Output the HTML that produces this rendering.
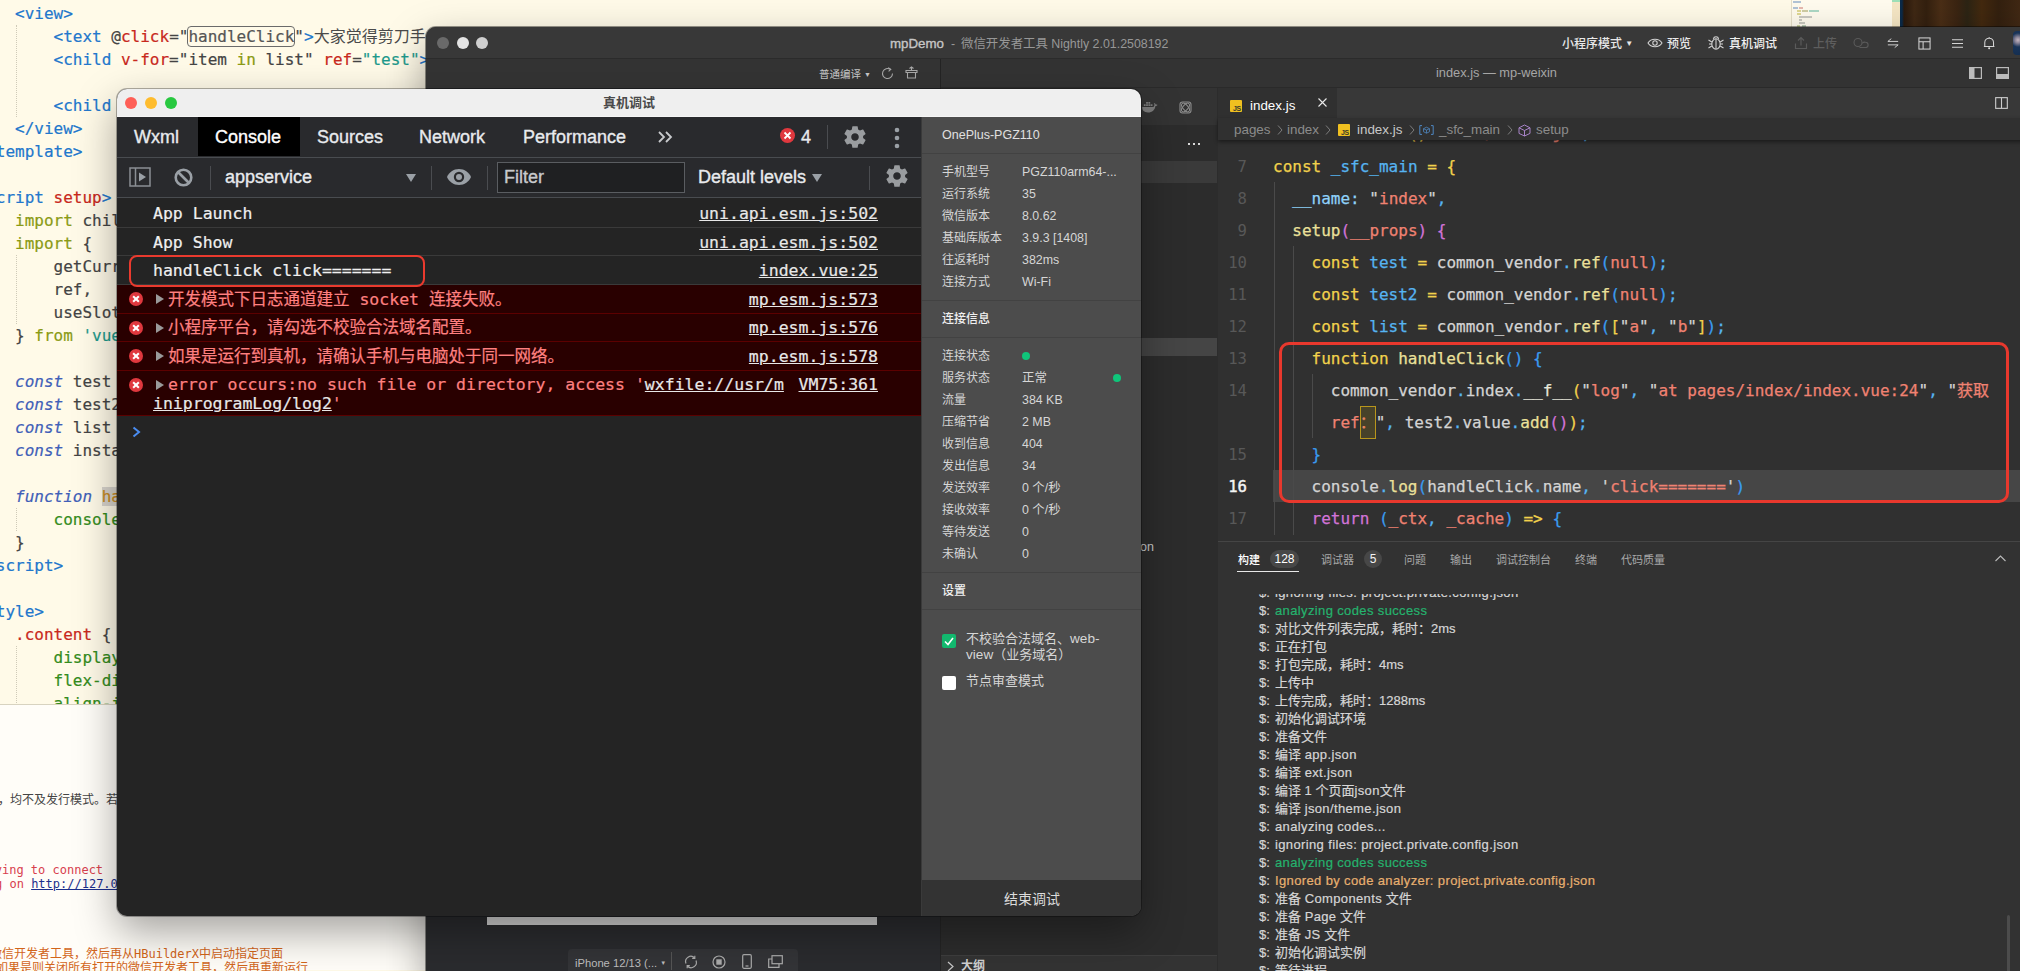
<!DOCTYPE html>
<html lang="zh">
<head>
<meta charset="utf-8">
<title>真机调试</title>
<style>
*{box-sizing:border-box;margin:0;padding:0}
html,body{width:2020px;height:971px;overflow:hidden;background:#fffae8}
body{position:relative;font-family:"Liberation Sans","Noto Sans CJK SC",sans-serif;}
.abs,.t{position:absolute}
.t{white-space:pre;line-height:1}
.mono{font-family:"DejaVu Sans Mono","Liberation Mono","Noto Sans CJK SC",monospace}
svg{position:absolute;overflow:visible}
/* ---------- HBuilderX (background) ---------- */
#hb{left:0;top:0;width:2020px;height:971px;background:#fffae8}
#hbcode{left:0;top:0;width:440px;height:705px;overflow:hidden}
.hl{position:absolute;white-space:pre;font-family:"DejaVu Sans Mono","Noto Sans CJK SC",monospace;font-size:16px;line-height:23px;height:23px;color:#444;-webkit-text-stroke:.2px}
.tg{color:#2277cc}.at{color:#c8281c}.st{color:#1e9a8c}.kw{color:#8a9a14}.ck{color:#3f5fb8;font-style:italic}.gr{color:#348c1c}.pl{color:#444}
.bx{outline:1px solid #6a6a6a;outline-offset:0;border-radius:3px;color:#555}
.zh{-webkit-text-stroke:0;color:#4a4a4a}
.hh{color:#c88a20;background:#d8d4cc}
.ig{position:absolute;left:16px;width:0;border-left:1px dotted #cfcab8}
#hbcon{left:0;top:704px;width:2020px;height:266px;background:#fffdf8;border-top:1px solid #d8d3c0}
</style>
<style>
.mm{position:absolute;height:2px;display:block;opacity:.9}
/* ---------- WeChat devtools window (origin 426,27) ---------- */
#wx{left:426px;top:27px;width:1600px;height:960px;background:#2e2e2e;border-radius:10px 0 0 0;box-shadow:0 16px 42px rgba(0,0,0,.36),0 0 0 1px rgba(0,0,0,.4);overflow:hidden;color:#ccc;font-size:13px}
#wx .tb{left:0;top:0;width:1600px;height:32px;background:#383838;border-bottom:1px solid #2b2b2b}
#wx .tl{position:absolute;top:10px;width:12px;height:12px;border-radius:50%}
#wx .row2l{left:0;top:32px;width:514px;height:29px;background:#343434}
#wx .row2r{left:515px;top:32px;width:1085px;height:29px;background:#333;border-bottom:1px solid #2a2a2a}
#wx .sim{left:0;top:61px;width:514px;height:900px;background:#2a2b2e}
#wx .vsep{left:514px;top:32px;width:1px;height:930px;background:#242424}
#wx .tree{left:515px;top:61px;width:277px;height:900px;background:#2c2c2c}
#wx .ed{left:792px;top:61px;width:810px;height:900px;background:#303030}
#wx .tabs{left:792px;top:61px;width:810px;height:30px;background:#383838}
#wx .tab{left:792px;top:61px;width:119px;height:30px;background:#303030}
#wx .bc{left:792px;top:91px;width:810px;height:22px;background:#303030;box-shadow:0 2px 4px rgba(0,0,0,.45);color:#8c8c8c;font-size:13px}
.jsic{position:absolute;width:12px;height:12px;background:#f0c020;border-radius:1px}
.jsic:after{content:"JS";position:absolute;right:1px;bottom:0;font:bold 7px/7px "Liberation Sans",sans-serif;color:#3a3a2a;letter-spacing:-.3px}
.cl{position:absolute;left:847px;white-space:pre;font-family:"DejaVu Sans Mono","Noto Sans CJK SC",monospace;font-size:16px;line-height:32px;height:32px;color:#d4d4d4;-webkit-text-stroke:.25px}
.ln{position:absolute;left:789px;width:32px;text-align:right;font-family:"DejaVu Sans Mono",monospace;font-size:15.600px;line-height:32px;height:32px;color:#585858}
.y{color:#f2d24c}.b{color:#56b4f2}.r{color:#f08272}.p{color:#d274d8}.w{color:#d8d8d8}.b2{color:#3a9cf0}.pb{color:#8fd2fa}.w2{color:#e6e6da}
.gd{position:absolute;width:1px;background:#4a4a4a}
#wx .pn{left:792px;top:514px;width:810px;height:450px;background:#323232;border-top:1px solid #454545}
.pt{position:absolute;top:527px;font-size:11px;line-height:12px;color:#a8a8a8;white-space:pre}
.bdg{position:absolute;top:523px;height:18px;border-radius:9px;background:#474747;color:#ddd;font-size:11px;line-height:18px;text-align:center}
.lg{position:absolute;left:832px;white-space:pre;font-size:13px;line-height:18px;height:18px;color:#d6d6d6;-webkit-text-stroke:.2px}
.lg i{font-style:normal;display:inline-block;width:17px}
.la{letter-spacing:.37px}.lg b{font-weight:normal;letter-spacing:.37px}.cb{position:relative}.cb:before{content:"";position:absolute;left:0;right:0;top:-7px;bottom:-7px;border:1px solid #b8961c;background:rgba(190,160,20,.17)}.fn{color:#ebe09a}
.g{color:#25b26e}.o{color:#e8b070}
</style>
<style>
/* ---------- Remote debug window (origin 117,89) ---------- */
#rd{left:117px;top:89px;width:1024px;height:827px;background:#242424;border-radius:10px;box-shadow:0 16px 42px rgba(0,0,0,.36),0 0 0 1px rgba(0,0,0,.3);overflow:hidden}
#rd .ttl{left:0;top:0;width:1024px;height:28px;background:#efefef;border-bottom:1px solid #f6f6f6}
#rd .tl{position:absolute;top:8px;width:12px;height:12px;border-radius:50%}
#rd .dtabs{left:0;top:28px;width:804px;height:41px;background:#292a2d;border-bottom:1px solid #494c50}
#rd .dtool{left:0;top:69px;width:804px;height:40px;background:#292a2d;border-bottom:1px solid #494c50}
.dt{position:absolute;top:38px;-webkit-text-stroke:.35px;font-size:18px;line-height:20px;color:#e8eaed;white-space:pre}
.tt{position:absolute;top:78px;-webkit-text-stroke:.35px;font-size:18px;line-height:20px;color:#e8eaed;white-space:pre}
.vs{position:absolute;width:1px;height:24px;background:#4a4c50}
.cr{position:absolute;left:0;width:804px;border-bottom:1px solid #3a3a3a;font-family:"DejaVu Sans Mono","Noto Sans CJK SC",monospace;font-size:16.5px;line-height:22px;color:#f0f0f0;white-space:pre;-webkit-text-stroke:.2px}
.cr .m{position:absolute;left:36px;top:4px}
.cr .lk{position:absolute;right:43px;top:4px;text-decoration:underline;color:#e8e8e8}
.er{background:#290000;border-bottom:1px solid #5c0000;color:#ff8080}
.er .m{left:51px}
.ei{position:absolute;left:12px;top:7px;width:14px;height:14px;border-radius:50%;background:#e0383e}
.ei:before,.ei:after{content:"";position:absolute;left:3px;top:6px;width:8px;height:2px;background:#fff;transform:rotate(45deg)}
.ei:after{transform:rotate(-45deg)}
.tri{position:absolute;left:39px;top:9px;width:0;height:0;border-left:8px solid #9a9a9a;border-top:5px solid transparent;border-bottom:5px solid transparent}
#rd .info{left:804px;top:28px;width:220px;height:799px;background:#4c4c4c;border-left:1px solid #3a3a3a;color:#d8d8d8;font-size:12px}
.il{position:absolute;left:20px;font-size:12px;line-height:14px;color:#d6d6d6;white-space:pre}
.iv{position:absolute;left:100px;font-size:12.400px;line-height:14px;color:#d6d6d6;white-space:pre}
.la2{font-size:13.6px}
.hr{position:absolute;left:0;width:220px;height:1px;background:#424242}
.dot{position:absolute;width:8px;height:8px;border-radius:50%;background:#0fc57a}
</style>
</head>
<body>
<div id="hb" class="abs">
<div id="hbcode" class="abs">
<div class="hl" style="top:1.5px;left:15.0px"><span class="tg">&lt;view&gt;</span></div>
<div class="hl" style="top:24.5px;left:53.5px"><span class="tg">&lt;text</span> <span class="pl">@</span><span class="at">click</span>="<span class="bx">handleClick</span>"<span class="tg">&gt;</span><span class="zh">大家觉得剪刀手</span></div>
<div class="hl" style="top:47.5px;left:53.5px"><span class="tg">&lt;child</span> <span class="at">v-for</span>="item <span class="kw">in</span> list" <span class="at">ref</span>=<span class="st">"test"</span><span class="tg">&gt;</span></div>
<div class="hl" style="top:93.5px;left:53.5px"><span class="tg">&lt;child</span> </div>
<div class="hl" style="top:116.5px;left:15.0px"><span class="tg">&lt;/view&gt;</span></div>
<div class="hl" style="top:139.5px;left:-23.5px"><span class="tg">&lt;/template&gt;</span></div>
<div class="hl" style="top:185.5px;left:-23.5px"><span class="tg">&lt;script</span> <span class="at">setup</span><span class="tg">&gt;</span></div>
<div class="hl" style="top:208.5px;left:15.0px"><span class="kw">import</span> child from</div>
<div class="hl" style="top:231.5px;left:15.0px"><span class="kw">import</span> {</div>
<div class="hl" style="top:254.5px;left:53.5px">getCurrentInstance,</div>
<div class="hl" style="top:277.5px;left:53.5px">ref,</div>
<div class="hl" style="top:300.5px;left:53.5px">useSlots</div>
<div class="hl" style="top:323.5px;left:15.0px">} <span class="kw">from</span> <span class="st">'vue'</span></div>
<div class="hl" style="top:369.5px;left:15.0px"><span class="ck">const</span> test = ref(null)</div>
<div class="hl" style="top:392.5px;left:15.0px"><span class="ck">const</span> test2 = ref(null)</div>
<div class="hl" style="top:415.5px;left:15.0px"><span class="ck">const</span> list = ref([])</div>
<div class="hl" style="top:438.5px;left:15.0px"><span class="ck">const</span> instance = getCurrentInstance()</div>
<div class="hl" style="top:484.5px;left:15.0px"><span class="ck">function</span> <span class="hh">handleClick</span>() {</div>
<div class="hl" style="top:507.5px;left:53.5px"><span class="gr">console</span>.log(handleClick.name)</div>
<div class="hl" style="top:530.5px;left:15.0px">}</div>
<div class="hl" style="top:553.5px;left:-23.5px"><span class="tg">&lt;/script&gt;</span></div>
<div class="hl" style="top:599.5px;left:-23.5px"><span class="tg">&lt;style&gt;</span></div>
<div class="hl" style="top:622.5px;left:15.0px"><span class="at">.content</span> {</div>
<div class="hl" style="top:645.5px;left:53.5px"><span class="gr">display</span>: flex;</div>
<div class="hl" style="top:668.5px;left:53.5px"><span class="gr">flex-direction</span>: column;</div>
<div class="hl" style="top:691.5px;left:53.5px"><span class="gr">align-items</span>: center;</div>
<div class="ig" style="top:24.5px;height:92px"></div>
<div class="ig" style="top:254.5px;height:69px"></div>
<div class="ig" style="top:507.5px;height:23px"></div>
<div class="ig" style="top:645.5px;height:69px"></div>
</div>
<div id="hbmini" class="abs" style="left:1791px;top:0;width:101px;height:27px;background:#fffbee;border-left:1px solid #e6dfc8">
 <i class="mm" style="left:1px;top:1px;width:8px;background:#a9bdd2"></i>
 <i class="mm" style="left:1px;top:7px;width:5px;background:#a9bdd2"></i><i class="mm" style="left:7px;top:7px;width:4px;background:#e3b0a6"></i>
 <i class="mm" style="left:5px;top:10px;width:4px;background:#ddd487"></i><i class="mm" style="left:10px;top:10px;width:6px;background:#cbc79a"></i><i class="mm" style="left:17px;top:10px;width:10px;background:#a3d4bf"></i>
 <i class="mm" style="left:5px;top:13px;width:4px;background:#ddd487"></i>
 <i class="mm" style="left:7px;top:16px;width:13px;background:#c4c3ba"></i>
 <i class="mm" style="left:7px;top:19px;width:3px;background:#c4c3ba"></i>
 <i class="mm" style="left:7px;top:22px;width:6px;background:#c4c3ba"></i>
 <i class="mm" style="left:5px;top:25px;width:3px;background:#c9d29a"></i><i class="mm" style="left:10px;top:25px;width:4px;background:#b5c9b0"></i>
</div>
<div class="abs" style="left:1892px;top:0;width:8px;height:27px;background:#f5e6c4"></div>
<div class="abs" style="left:1892px;top:0;width:8px;height:2px;background:#9fe0b8"></div>
<div class="abs" style="left:1900px;top:0;width:120px;height:28px;background:linear-gradient(90deg,#0b2a48 0,#0b2a48 2px,#2a190c 4px,#3f2814 12%,#33200f 22%,#4a2e16 34%,#3a2412 48%,#2c2414 56%,#43290f 68%,#33200f 82%,#402814 100%)"></div>
<div id="hbcon" class="abs">
 <div class="t" style="left:-2px;top:89px;font-size:12px;color:#444">，均不及发行模式。若</div>
 <div class="t mono" style="left:-12.5px;top:159px;font-size:12px;color:#d8404e">rying to connect</div>
 <div class="t mono" style="left:-5px;top:173px;font-size:12px;color:#d8404e">g on <span style="color:#1c2f8c;text-decoration:underline">http://127.0.0.1</span></div>
 <div class="t mono" style="left:-10px;top:243px;font-size:12px;color:#d2651a">微信开发者工具，然后再从HBuilderX中启动指定页面</div>
 <div class="t mono" style="left:-4px;top:257px;font-size:12px;color:#d2651a">如果是则关闭所有打开的微信开发者工具，然后再重新运行</div>
</div>
</div>
<div id="wx" class="abs">
<div class="abs tb"></div>
<div class="tl" style="left:11px;background:#6a6a6a"></div>
<div class="tl" style="left:31px;background:#e4e4e4"></div>
<div class="tl" style="left:50px;background:#cfcfcf"></div>
<div class="t" style="left:464px;top:10px;font-size:12.4px;color:#979797"><span style="color:#c6c6c6;font-size:13.3px;-webkit-text-stroke:.35px #c6c6c6">mpDemo</span><span style="margin:0 6px 0 7px">-</span>微信开发者工具 Nightly 2.01.2508192</div>
<div class="t" style="left:1136px;top:11px;font-size:12px;color:#e8e8e8;font-weight:500">小程序模式 <span style="font-size:8px;position:relative;top:-2px">▼</span></div>
<svg style="left:1221px;top:10px" width="16" height="12" viewBox="0 0 16 12"><path d="M1 6 C4 1 12 1 15 6 C12 11 4 11 1 6Z" fill="none" stroke="#d4d4d4" stroke-width="1.05"/><circle cx="8" cy="6" r="2.2" fill="none" stroke="#d4d4d4" stroke-width="1.05"/></svg>
<div class="t" style="left:1241px;top:11px;font-size:12px;color:#e8e8e8;font-weight:500">预览</div>
<svg style="left:1281px;top:8px" width="18" height="16" viewBox="0 0 18 16"><ellipse cx="9" cy="9" rx="4.2" ry="5.2" fill="none" stroke="#d4d4d4" stroke-width="1.1"/><path d="M9 4v10M6.3 3.8a2.8 2.8 0 0 1 5.4 0M4.8 7 1.5 5M4.8 11 1.5 13M13.2 7l3.3-2M13.2 11l3.3 2M4.8 9H2M13.2 9H16" fill="none" stroke="#d4d4d4" stroke-width="1.05"/></svg>
<div class="t" style="left:1303px;top:11px;font-size:12px;color:#f0f0f0;font-weight:500">真机调试</div>
<svg style="left:1368px;top:9px" width="14" height="14" viewBox="0 0 14 14"><path d="M1.5 7.5v5h11v-5M7 1.5v8M4 4.5l3-3 3 3" fill="none" stroke="#5a5a5a" stroke-width="1.2"/></svg>
<div class="t" style="left:1387px;top:11px;font-size:12px;color:#5e5e5e;font-weight:500">上传</div>
<svg style="left:1426px;top:10px" width="17" height="12" viewBox="0 0 17 12"><circle cx="6" cy="5.5" r="4" fill="none" stroke="#5a5a5a" stroke-width="1.1"/><path d="M7.5 10.5h6a2.6 2.6 0 0 0 0-5.2a3 3 0 0 0-3.2 1" fill="none" stroke="#5a5a5a" stroke-width="1.1"/></svg>
<svg style="left:1461px;top:11px" width="12" height="10.300" viewBox="0 0 14 12"><path d="M1 4h12M1 4l4-3.200M13 8H1M13 8l-4 3.200" fill="none" stroke="#d4d4d4" stroke-width="1.1"/></svg>
<svg style="left:1492px;top:10px" width="13" height="13" viewBox="0 0 14 14"><rect x="1" y="1" width="12" height="12" fill="none" stroke="#d4d4d4" stroke-width="1.1"/><path d="M1 5h12M5.5 5v8" stroke="#d4d4d4" stroke-width="1.1"/></svg>
<svg style="left:1526px;top:11px" width="11" height="11" viewBox="0 0 12 12"><path d="M0 2h12M0 6h12M0 10h12" stroke="#d4d4d4" stroke-width="1.1"/></svg>
<svg style="left:1557px;top:9px" width="12.300" height="14" viewBox="0 0 14 16"><path d="M2 12V7.5a5 5 0 0 1 10 0V12M1 12h12M7 2.5V1" fill="none" stroke="#d4d4d4" stroke-width="1.2"/><circle cx="7" cy="14" r="1.2" fill="#ddd"/></svg>
<div class="abs" style="left:1587px;top:4px;width:24px;height:24px;border-radius:4px;background:radial-gradient(circle at 5px 9px,#c8b8c0 0,#8a8498 3px,#1a3458 7px,#0e2a4c 100%)"></div>
<div class="abs row2l"></div><div class="abs row2r"></div>
<div class="t" style="left:393px;top:42px;font-size:10.5px;color:#c8c8c8">普通编译 <span style="font-size:7px;position:relative;top:-1px">▼</span></div>
<svg style="left:455px;top:40px" width="13" height="13" viewBox="0 0 13 13"><path d="M11.5 6.5a5 5 0 1 1-2.2-4.1" fill="none" stroke="#aaa" stroke-width="1.1"/><path d="M7.2 0.6 9.8 2.4 7.6 4.4" fill="none" stroke="#aaa" stroke-width="1.1"/></svg>
<svg style="left:479px;top:39px" width="13" height="13" viewBox="0 0 13 13"><path d="M2.5 6.5h8v5.5h-8zM1 4.5h11v2H1zM6.5 4.5V1.2M4.5 2.5l2-1.5 2 1.5" fill="none" stroke="#aaa" stroke-width="1.1"/></svg>
<div class="t" style="left:1010px;top:40px;font-size:12.800px;color:#a6a6a6">index.js — mp-weixin</div>
<svg style="left:1543px;top:40px" width="13" height="12" viewBox="0 0 13 12"><rect x=".6" y=".6" width="11.8" height="10.8" fill="none" stroke="#bbb" stroke-width="1.2"/><rect x="1" y="1" width="4.5" height="10" fill="#bbb"/></svg>
<svg style="left:1570px;top:40px" width="13" height="12" viewBox="0 0 13 12"><rect x=".6" y=".6" width="11.8" height="10.8" fill="none" stroke="#bbb" stroke-width="1.2"/><rect x="1" y="7" width="11" height="4" fill="#bbb"/></svg>
<div class="abs sim"></div><div class="abs tree"></div><div class="abs vsep"></div>
<div class="abs" style="left:61px;top:890px;width:390px;height:8px;background:#d0d0d0"></div>
<div class="abs" style="left:142px;top:922px;width:230px;height:40px;background:#333437;border-radius:4px"></div>
<div class="t" style="left:149px;top:931px;font-size:11.2px;color:#bdbdbd">iPhone 12/13 (... <span style="font-size:6px;position:relative;top:-2px">▼</span></div>
<div class="abs" style="left:245px;top:925px;width:1px;height:18px;background:#555"></div>
<svg style="left:258px;top:928px" width="14" height="14" viewBox="0 0 14 14"><path d="M2 8.5A5.2 5.2 0 0 1 10.6 3M12 5.5A5.2 5.2 0 0 1 3.4 11" fill="none" stroke="#aaa" stroke-width="1.2"/><path d="M10.8.8v2.6H8.2M3.2 13.2v-2.6h2.6" fill="none" stroke="#aaa" stroke-width="1.2"/></svg>
<svg style="left:286px;top:928px" width="14" height="14" viewBox="0 0 14 14"><circle cx="7" cy="7" r="6" fill="none" stroke="#aaa" stroke-width="1.2"/><rect x="4.3" y="4.3" width="5.4" height="5.4" fill="#aaa"/></svg>
<svg style="left:316px;top:927px" width="10" height="15" viewBox="0 0 10 15"><rect x=".7" y=".7" width="8.6" height="13.6" rx="1.2" fill="none" stroke="#aaa" stroke-width="1.2"/><path d="M3.5 12h3" stroke="#aaa" stroke-width="1.2"/></svg>
<svg style="left:342px;top:928px" width="15" height="13" viewBox="0 0 15 13"><rect x="4" y=".7" width="10.3" height="8" fill="none" stroke="#aaa" stroke-width="1.2"/><path d="M4 4H.7v8.3H11V9" fill="none" stroke="#aaa" stroke-width="1.2"/></svg>
<div class="abs" style="left:515px;top:61px;width:276px;height:37px;background:#333"></div>
<div class="abs" style="left:714px;top:134px;width:77px;height:22px;background:#3a3a3a"></div>
<div class="abs" style="left:714px;top:311px;width:77px;height:18px;background:#454545"></div>
<div class="abs" style="left:762px;top:116px;width:2px;height:2px;background:#d8d8d8;box-shadow:5px 0 0 #d8d8d8,10px 0 0 #d8d8d8"></div>
<div class="t" style="left:714px;top:514px;font-size:12.5px;color:#c8c8c8">on</div>
<svg style="left:716px;top:73.5px" width="15.500" height="12" viewBox="0 0 17 13"><path d="M.3 6.500h11.200c1 0 1.700-.6 2-1.500.3-1-.1-1.900-.6-2.500.9-.4 1.800.3 2.100 1.300.7-.2 1.500 0 2 .4-.4.800-1.300 1.200-2.300 1.100C14.200 9.500 11.300 12.500 6.500 12.500 2.300 12.500.2 10 .3 6.500z" fill="#7c7c7c"/><path d="M2 3.500h2v2H2zM4.500 3.500h2v2h-2zM7 3.500h2v2H7zM4.500 1h2v2h-2zM7 1h2v2H7zM9.500 3.500h2v2h-2z" fill="#7c7c7c"/></svg>
<svg style="left:753px;top:74px" width="13" height="13" viewBox="0 0 13 13"><rect x="1" y="1" width="11" height="11" rx="2.5" fill="none" stroke="#8c8c8c" stroke-width="1.1"/><ellipse cx="6.5" cy="6.5" rx="2.6" ry="5.2" transform="rotate(40 6.5 6.5)" fill="none" stroke="#8c8c8c" stroke-width="1"/><ellipse cx="6.500" cy="6.500" rx="2.600" ry="5.200" transform="rotate(-40 6.5 6.5)" fill="none" stroke="#8c8c8c" stroke-width="1"/></svg>
<div class="abs" style="left:515px;top:928px;width:276px;height:34px;background:#333;border-top:1px solid #3e3e3e"></div>
<svg style="left:521px;top:934px" width="7" height="11" viewBox="0 0 7 11"><path d="M1 1l5 4.500-5 4.500" fill="none" stroke="#c8c8c8" stroke-width="1.200"/></svg><div class="t" style="left:535px;top:933px;font-size:12px;color:#d0d0d0;font-weight:bold">大纲</div>
<div class="abs ed"></div><div class="abs tabs"></div><div class="abs tab"></div>
<div class="jsic" style="left:804px;top:73px"></div>
<div class="t" style="left:824px;top:72px;font-size:13.4px;color:#fff">index.js</div>
<svg style="left:892px;top:71px" width="9" height="9" viewBox="0 0 9 9"><path d="M.5.5l8 8M8.5.5l-8 8" stroke="#e8e8e8" stroke-width="1.1"/></svg>
<svg style="left:1569px;top:70px" width="13" height="12" viewBox="0 0 14 13"><rect x=".7" y=".7" width="12.6" height="11.6" fill="none" stroke="#ccc" stroke-width="1.2"/><path d="M7 .7v11.6" stroke="#ccc" stroke-width="1.2"/></svg>
<div class="abs" style="left:847px;top:443px;width:760px;height:32px;background:#464646"></div>
<div class="gd" style="left:848px;top:155px;height:353px"></div>
<div class="gd" style="left:867px;top:219px;height:289px"></div>
<div class="gd" style="left:886px;top:347px;height:64px"></div>
<div class="ln" style="top:124px">7</div>
<div class="cl" style="top:124px;left:847.0px"><span class="y">const</span> <span class="b">_sfc_main</span> <span class="y">=</span> <span class="y">{</span></div>
<div class="ln" style="top:156px">8</div>
<div class="cl" style="top:156px;left:866.3px"><span class="pb">__name:</span> "<span class="r">index</span>"<span class="b">,</span></div>
<div class="ln" style="top:188px">9</div>
<div class="cl" style="top:188px;left:866.3px"><span class="fn">setup</span><span class="p">(</span><span class="r">__props</span><span class="p">)</span> <span class="p">{</span></div>
<div class="ln" style="top:220px">10</div>
<div class="cl" style="top:220px;left:885.5px"><span class="y">const</span> <span class="b">test</span> <span class="y">=</span> common_vendor<span class="b">.</span><span class="fn">ref</span><span class="b2">(</span><span class="r">null</span><span class="b2">)</span><span class="b">;</span></div>
<div class="ln" style="top:252px">11</div>
<div class="cl" style="top:252px;left:885.5px"><span class="y">const</span> <span class="b">test2</span> <span class="y">=</span> common_vendor<span class="b">.</span><span class="fn">ref</span><span class="b2">(</span><span class="r">null</span><span class="b2">)</span><span class="b">;</span></div>
<div class="ln" style="top:284px">12</div>
<div class="cl" style="top:284px;left:885.5px"><span class="y">const</span> <span class="b">list</span> <span class="y">=</span> common_vendor<span class="b">.</span><span class="fn">ref</span><span class="b2">(</span><span class="y">[</span>"<span class="r">a</span>"<span class="b">,</span> "<span class="r">b</span>"<span class="y">]</span><span class="b2">)</span><span class="b">;</span></div>
<div class="ln" style="top:316px">13</div>
<div class="cl" style="top:316px;left:885.5px"><span class="y">function</span> <span class="fn">handleClick</span><span class="b2">()</span> <span class="b2">{</span></div>
<div class="ln" style="top:348px">14</div>
<div class="cl" style="top:348px;left:904.8px">common_vendor<span class="b">.</span>index<span class="b">.</span><span class="w2">__f__</span><span class="y">(</span>"<span class="r">log</span>"<span class="b">,</span> "<span class="r">at pages/index/index.vue:24</span>"<span class="b">,</span> "<span class="r">获取</span></div>
<div class="cl" style="top:380px;left:904.8px"><span class="r">ref<span class="cb">：</span></span>"<span class="b">,</span> test2<span class="b">.</span>value<span class="b">.</span><span class="fn">add</span><span class="p">()</span><span class="y">)</span><span class="b">;</span></div>
<div class="ln" style="top:412px">15</div>
<div class="cl" style="top:412px;left:885.5px"><span class="b2">}</span></div>
<div class="ln" style="top:444px;color:#f4f4f4;-webkit-text-stroke:.45px #f4f4f4">16</div>
<div class="cl" style="top:444px;left:885.5px">console<span class="b">.</span><span class="fn">log</span><span class="b2">(</span>handleClick<span class="b">.</span>name<span class="b">,</span> '<span class="r">click=======</span>'<span class="b2">)</span></div>
<div class="ln" style="top:476px">17</div>
<div class="cl" style="top:476px;left:885.5px"><span class="p">return</span> <span class="b2">(</span><span class="r">_ctx</span><span class="b">,</span> <span class="r">_cache</span><span class="b2">)</span> <span class="y">=&gt;</span> <span class="b2">{</span></div>
<div class="cl" style="top:91px;left:847px"><span class="y">const</span> <span class="b">child</span> <span class="y">=</span> <span class="y">()</span> <span class="y">=&gt;</span> "<span class="r">./child.js</span>"<span class="b">;</span></div>
<div class="abs bc"></div>
<div class="t" style="left:808px;top:96px;font-size:13.4px;color:#8c8c8c">pages</div>
<svg style="left:851px;top:97.5px" width="6" height="10" viewBox="0 0 6 10"><path d="M1 .5 5 5 1 9.5" fill="none" stroke="#7c7c7c" stroke-width="1"/></svg>
<div class="t" style="left:861px;top:96px;font-size:13.4px;color:#8c8c8c">index</div>
<svg style="left:899px;top:97.5px" width="6" height="10" viewBox="0 0 6 10"><path d="M1 .5 5 5 1 9.5" fill="none" stroke="#7c7c7c" stroke-width="1"/></svg>
<div class="jsic" style="left:912px;top:97px"></div>
<div class="t" style="left:931px;top:96px;font-size:13.4px;color:#c8c8c8">index.js</div>
<svg style="left:983px;top:97.5px" width="6" height="10" viewBox="0 0 6 10"><path d="M1 .5 5 5 1 9.5" fill="none" stroke="#7c7c7c" stroke-width="1"/></svg>
<svg style="left:993px;top:98px" width="15" height="10" viewBox="0 0 15 10"><path d="M3 .6H.8v8.800H3M12 .6h2.200v8.800H12" fill="none" stroke="#4e86c0" stroke-width="1"/><path d="M7.500 2.200 10.500 3.700v3L7.500 8.200 4.500 6.700v-3zM4.500 3.700l3 1.400 3-1.400M7.500 5.100v3" fill="none" stroke="#4e86c0" stroke-width=".8"/></svg>
<div class="t" style="left:1013px;top:96px;font-size:13.4px;color:#8c8c8c">_sfc_main</div>
<svg style="left:1081px;top:97.5px" width="6" height="10" viewBox="0 0 6 10"><path d="M1 .5 5 5 1 9.5" fill="none" stroke="#7c7c7c" stroke-width="1"/></svg>
<svg style="left:1092px;top:97px" width="13" height="13" viewBox="0 0 13 13"><path d="M6.5 1 12 3.800v5.600L6.500 12 1 9.400V3.800zM1 3.800l5.500 2.700L12 3.800M6.500 6.500V12" fill="none" stroke="#a884c8" stroke-width="1"/></svg>
<div class="t" style="left:1110px;top:96px;font-size:13.4px;color:#8c8c8c">setup</div>
<div class="abs" style="left:853px;top:315px;width:730px;height:161px;border:3px solid #e8382d;border-radius:10px"></div>
<div class="abs pn"></div>
<div class="pt" style="left:812px;color:#fff;font-weight:500">构建</div>
<div class="bdg" style="left:844px;width:29px;font-size:12px;color:#fff">128</div>
<div class="abs" style="left:810.5px;top:544px;width:62.5px;height:1px;background:#e8e8e8"></div>
<div class="pt" style="left:895px">调试器</div>
<div class="bdg" style="left:938px;width:18px;font-size:12px;color:#f4f4f4">5</div>
<div class="pt" style="left:978px">问题</div>
<div class="pt" style="left:1024px">输出</div>
<div class="pt" style="left:1070px">调试控制台</div>
<div class="pt" style="left:1149px">终端</div>
<div class="pt" style="left:1195px">代码质量</div>
<svg style="left:1569px;top:528px" width="11" height="7" viewBox="0 0 11 7"><path d="M.5 6 5.5 1l5 5" fill="none" stroke="#bbb" stroke-width="1.1"/></svg>
<div class="abs" style="left:792px;top:567px;width:810px;height:400px;overflow:hidden">
<div class="lg" style="left:41px;top:-10px"><i style="width:16px">$:</i><span class="la">ignoring files: project.private.config.json</span></div>
<div class="lg" style="left:41px;top:8px"><i style="width:16px">$:</i><span class="g la">analyzing codes success</span></div>
<div class="lg" style="left:41px;top:26px"><i style="width:16px">$:</i><span>对比文件列表完成，耗时：2ms</span></div>
<div class="lg" style="left:41px;top:44px"><i style="width:16px">$:</i><span>正在打包</span></div>
<div class="lg" style="left:41px;top:62px"><i style="width:16px">$:</i><span>打包完成，耗时：4ms</span></div>
<div class="lg" style="left:41px;top:80px"><i style="width:16px">$:</i><span>上传中</span></div>
<div class="lg" style="left:41px;top:98px"><i style="width:16px">$:</i><span>上传完成，耗时：1288ms</span></div>
<div class="lg" style="left:41px;top:116px"><i style="width:16px">$:</i><span>初始化调试环境</span></div>
<div class="lg" style="left:41px;top:134px"><i style="width:16px">$:</i><span>准备文件</span></div>
<div class="lg" style="left:41px;top:152px"><i style="width:16px">$:</i><span>编译 <b>app.json</b></span></div>
<div class="lg" style="left:41px;top:170px"><i style="width:16px">$:</i><span>编译 <b>ext.json</b></span></div>
<div class="lg" style="left:41px;top:188px"><i style="width:16px">$:</i><span>编译 1 个页面<b>json</b>文件</span></div>
<div class="lg" style="left:41px;top:206px"><i style="width:16px">$:</i><span>编译 <b>json/theme.json</b></span></div>
<div class="lg" style="left:41px;top:224px"><i style="width:16px">$:</i><span class="la">analyzing codes...</span></div>
<div class="lg" style="left:41px;top:242px"><i style="width:16px">$:</i><span class="la">ignoring files: project.private.config.json</span></div>
<div class="lg" style="left:41px;top:260px"><i style="width:16px">$:</i><span class="g la">analyzing codes success</span></div>
<div class="lg" style="left:41px;top:278px"><i style="width:16px">$:</i><span class="o la">Ignored by code analyzer: project.private.config.json</span></div>
<div class="lg" style="left:41px;top:296px"><i style="width:16px">$:</i><span>准备 <b>Components</b> 文件</span></div>
<div class="lg" style="left:41px;top:314px"><i style="width:16px">$:</i><span>准备 <b>Page</b> 文件</span></div>
<div class="lg" style="left:41px;top:332px"><i style="width:16px">$:</i><span>准备 <b>JS</b> 文件</span></div>
<div class="lg" style="left:41px;top:350px"><i style="width:16px">$:</i><span>初始化调试实例</span></div>
<div class="lg" style="left:41px;top:368px"><i style="width:16px">$:</i><span>等待进程</span></div>
</div>
<div class="abs" style="left:1581px;top:888px;width:3px;height:80px;background:#4c4c4c;border-radius:2px"></div>
</div>
<div id="rd" class="abs">
<div class="abs ttl"></div>
<div class="tl" style="left:8px;background:#fe5f57"></div>
<div class="tl" style="left:28px;background:#febc2e"></div>
<div class="tl" style="left:48px;background:#28c840"></div>
<div class="t" style="left:486px;top:7px;font-size:13px;font-weight:bold;color:#4a4a4a">真机调试</div>
<div class="abs dtabs"></div><div class="abs dtool"></div>
<div class="abs" style="left:81px;top:28px;width:102px;height:39px;background:#000"></div>
<div class="dt" style="left:17px">Wxml</div>
<div class="dt" style="left:98px;color:#fff">Console</div>
<div class="dt" style="left:200px">Sources</div>
<div class="dt" style="left:302px">Network</div>
<div class="dt" style="left:406px">Performance</div>
<svg style="left:541px;top:42px" width="14" height="12" viewBox="0 0 14 12"><path d="M1 1l5 5-5 5M8 1l5 5-5 5" fill="none" stroke="#c8cacd" stroke-width="1.8"/></svg>
<div class="abs" style="left:663px;top:39px;width:15px;height:15px;border-radius:50%;background:#e0383e"></div>
<svg style="left:667px;top:43px" width="7" height="7" viewBox="0 0 7 7"><path d="M.5.5l6 6M6.5.5l-6 6" stroke="#fff" stroke-width="1.8"/></svg>
<div class="dt" style="left:684px">4</div>
<div class="vs" style="left:710px;top:36px"></div>
<svg style="left:725px;top:35px" width="26" height="26" viewBox="0 0 24 24"><path fill="#999c9f" d="M19.43 12.98c.04-.32.07-.64.07-.98s-.03-.66-.07-.98l2.110-1.650c.19-.15.24-.42.12-.64l-2-3.460c-.12-.22-.39-.3-.61-.22l-2.490 1c-.52-.4-1.080-.73-1.690-.98l-.38-2.650A.488.488 0 0 0 14 2h-4c-.25 0-.46.18-.49.42l-.38 2.650c-.61.25-1.170.59-1.690.98l-2.490-1c-.23-.09-.49 0-.61.22l-2 3.460c-.13.22-.07.49.12.64l2.110 1.650c-.04.32-.07.65-.07.98s.03.66.07.98l-2.110 1.650c-.19.15-.24.42-.12.64l2 3.460c.12.22.39.3.61.22l2.490-1c.52.4 1.080.73 1.690.98l.38 2.650c.03.24.24.42.49.42h4c.25 0 .46-.18.49-.42l.38-2.650c.61-.25 1.170-.59 1.690-.98l2.490 1c.23.09.49 0 .61-.22l2-3.460c.12-.22.07-.49-.12-.64l-2.110-1.650zM12 15.500c-1.930 0-3.500-1.570-3.500-3.500s1.570-3.500 3.500-3.500 3.500 1.570 3.500 3.500-1.570 3.500-3.500 3.500z"/></svg>
<svg style="left:777px;top:38px" width="6" height="22" viewBox="0 0 6 22"><circle cx="3" cy="3" r="2.3" fill="#9aa0a6"/><circle cx="3" cy="11" r="2.3" fill="#9aa0a6"/><circle cx="3" cy="19" r="2.3" fill="#9aa0a6"/></svg>
<svg style="left:12px;top:78px" width="22" height="20" viewBox="0 0 22 20"><rect x="1" y="1" width="20" height="18" fill="none" stroke="#8a8f94" stroke-width="1.5"/><path d="M6.5 1v18" stroke="#8a8f94" stroke-width="1.5"/><path d="M10 5.500v9l7-4.500z" fill="#9aa0a6"/></svg>
<svg style="left:57px;top:79px" width="19" height="19" viewBox="0 0 19 19"><circle cx="9.5" cy="9.5" r="7.8" fill="none" stroke="#9aa0a6" stroke-width="2.6"/><path d="M4 4l11 11" stroke="#9aa0a6" stroke-width="2.6"/></svg>
<div class="vs" style="left:93px;top:77px"></div>
<div class="tt" style="left:108px">appservice</div>
<div class="abs" style="left:289px;top:85px;width:0;height:0;border-top:8px solid #9aa0a6;border-left:5.5px solid transparent;border-right:5.5px solid transparent"></div>
<div class="vs" style="left:314px;top:77px"></div>
<svg style="left:329px;top:79px" width="26" height="18" viewBox="0 0 26 18"><path d="M13 1C7.500 1 3 4.500 1 9c2 4.500 6.500 8 12 8s10-3.500 12-8c-2-4.500-6.500-8-12-8z" fill="#9aa0a6"/><circle cx="13" cy="9" r="5.2" fill="#292a2d"/><circle cx="13" cy="9" r="3" fill="#9aa0a6"/></svg>
<div class="vs" style="left:370px;top:77px"></div>
<div class="abs" style="left:380px;top:73px;width:188px;height:31px;background:#1f2022;border:1px solid #5a5d61"></div>
<div class="tt" style="left:387px;color:#c8cacd">Filter</div>
<div class="tt" style="left:581px">Default levels</div>
<div class="abs" style="left:695px;top:85px;width:0;height:0;border-top:8px solid #9aa0a6;border-left:5.5px solid transparent;border-right:5.5px solid transparent"></div>
<div class="vs" style="left:752px;top:77px"></div>
<svg style="left:767px;top:74px" width="26" height="26" viewBox="0 0 24 24"><path fill="#999c9f" d="M19.43 12.98c.04-.32.07-.64.07-.98s-.03-.66-.07-.98l2.110-1.650c.19-.15.24-.42.12-.64l-2-3.460c-.12-.22-.39-.3-.61-.22l-2.490 1c-.52-.4-1.080-.73-1.690-.98l-.38-2.650A.488.488 0 0 0 14 2h-4c-.25 0-.46.18-.49.42l-.38 2.650c-.61.25-1.170.59-1.690.98l-2.490-1c-.23-.09-.49 0-.61.22l-2 3.460c-.13.22-.07.49.12.64l2.110 1.650c-.04.32-.07.65-.07.98s.03.66.07.98l-2.110 1.650c-.19.15-.24.42-.12.64l2 3.460c.12.22.39.3.61.22l2.490-1c.52.4 1.080.73 1.690.98l.38 2.650c.03.24.24.42.49.42h4c.25 0 .46-.18.49-.42l.38-2.650c.61-.25 1.170-.59 1.690-.98l2.490 1c.23.09.49 0 .61-.22l2-3.460c.12-.22.07-.49-.12-.64l-2.110-1.650zM12 15.500c-1.930 0-3.500-1.570-3.500-3.500s1.570-3.500 3.500-3.500 3.500 1.570 3.500 3.500-1.570 3.500-3.500 3.500z"/></svg>
<div class="cr" style="top:109px;height:30px"><span class="m" style="top:5px">App Launch</span><span class="lk" style="top:5px">uni.api.esm.js:502</span></div>
<div class="cr" style="top:139px;height:28px"><span class="m" style="top:4px">App Show</span><span class="lk" style="top:4px">uni.api.esm.js:502</span></div>
<div class="cr" style="top:167px;height:29px"><span class="m" style="top:4px">handleClick click=======</span><span class="lk" style="top:4px">index.vue:25</span></div>
<div class="cr er" style="top:196px;height:29px"><i class="ei"></i><i class="tri"></i><span class="m" style="top:4px">开发模式下日志通道建立 socket 连接失败。</span><span class="lk" style="top:4px">mp.esm.js:573</span></div>
<div class="cr er" style="top:225px;height:28px"><i class="ei"></i><i class="tri"></i><span class="m" style="top:3px">小程序平台，请勾选不校验合法域名配置。</span><span class="lk" style="top:3px">mp.esm.js:576</span></div>
<div class="cr er" style="top:253px;height:29px"><i class="ei"></i><i class="tri"></i><span class="m" style="top:4px">如果是运行到真机，请确认手机与电脑处于同一网络。</span><span class="lk" style="top:4px">mp.esm.js:578</span></div>
<div class="cr er" style="top:282px;height:45px"><i class="ei"></i><i class="tri"></i><span class="m" style="top:3px">error occurs:no such file or directory, access '<u style="color:#e8e8e8">wxfile://usr/m</u></span><span class="m" style="left:36px;top:22px"><u style="color:#e8e8e8">iniprogramLog/log2</u>'</span><span class="lk" style="top:3px">VM75:361</span></div>
<svg style="left:15px;top:337px" width="9" height="12" viewBox="0 0 9 12"><path d="M1.5 1.500 7 6l-5.500 4.500" fill="none" stroke="#4a8cf0" stroke-width="2"/></svg>
<div class="abs" style="left:12px;top:166px;width:296px;height:32px;border:2px solid #ea3a2e;border-radius:8px"></div>
<div class="abs info">
<div class="il" style="top:11px;color:#e0e0e0;font-size:12.5px">OnePlus-PGZ110</div>
<div class="hr" style="top:36px"></div>
<div class="il" style="top:48px">手机型号</div><div class="iv" style="top:48px">PGZ110arm64-...</div>
<div class="il" style="top:70px">运行系统</div><div class="iv" style="top:70px">35</div>
<div class="il" style="top:92px">微信版本</div><div class="iv" style="top:92px">8.0.62</div>
<div class="il" style="top:114px">基础库版本</div><div class="iv" style="top:114px">3.9.3 [1408]</div>
<div class="il" style="top:136px">往返耗时</div><div class="iv" style="top:136px">382ms</div>
<div class="il" style="top:158px">连接方式</div><div class="iv" style="top:158px">Wi-Fi</div>
<div class="hr" style="top:183px"></div>
<div class="il" style="top:195px;color:#f0f0f0;font-weight:500">连接信息</div>
<div class="hr" style="top:220px"></div>
<div class="il" style="top:232px">连接状态</div><div class="iv" style="top:232px"></div>
<div class="il" style="top:254px">服务状态</div><div class="iv" style="top:254px">正常</div>
<div class="il" style="top:276px">流量</div><div class="iv" style="top:276px">384 KB</div>
<div class="il" style="top:298px">压缩节省</div><div class="iv" style="top:298px">2 MB</div>
<div class="il" style="top:320px">收到信息</div><div class="iv" style="top:320px">404</div>
<div class="il" style="top:342px">发出信息</div><div class="iv" style="top:342px">34</div>
<div class="il" style="top:364px">发送效率</div><div class="iv" style="top:364px">0 个/秒</div>
<div class="il" style="top:386px">接收效率</div><div class="iv" style="top:386px">0 个/秒</div>
<div class="il" style="top:408px">等待发送</div><div class="iv" style="top:408px">0</div>
<div class="il" style="top:430px">未确认</div><div class="iv" style="top:430px">0</div>
<div class="dot" style="left:100px;top:235px"></div><div class="dot" style="left:191px;top:257px"></div>
<div class="hr" style="top:455px"></div>
<div class="il" style="top:467px;color:#f0f0f0;font-weight:500">设置</div>
<div class="hr" style="top:492px"></div>
<div class="abs" style="left:20px;top:517px;width:14px;height:14px;background:#12b86e;border-radius:2px"></div>
<svg style="left:22px;top:520px" width="10" height="9" viewBox="0 0 10 9"><path d="M1 4.500 4 7.500 9 1" fill="none" stroke="#fff" stroke-width="1.6"/></svg>
<div class="il" style="left:44px;top:514px;line-height:15.5px;font-size:13px">不校验合法域名、<span class="la2">web-</span>
<span class="la2">view</span>（业务域名）</div>
<div class="abs" style="left:20px;top:559px;width:14px;height:14px;background:#fff;border-radius:2px"></div>
<div class="il" style="left:44px;top:557px;font-size:13px">节点审查模式</div>
<div class="abs" style="left:0;top:763px;width:220px;height:37px;background:#333"></div>
<div class="t" style="left:82px;top:775px;font-size:14px;color:#dcdcdc">结束调试</div>
</div>
</div>
</body>
</html>
